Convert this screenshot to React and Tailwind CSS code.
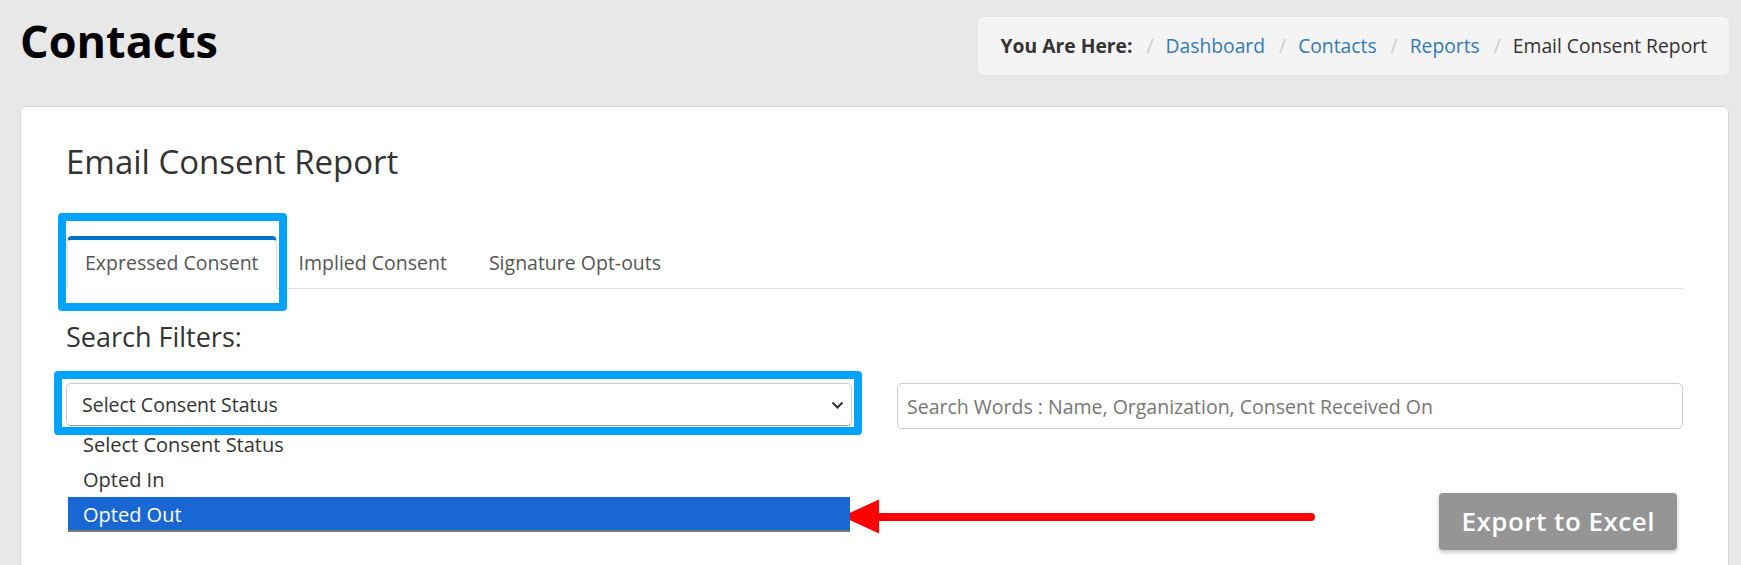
import { useState } from 'react'

const crumbs = [
  { label: 'Dashboard', link: true },
  { label: 'Contacts', link: true },
  { label: 'Reports', link: true },
  { label: 'Email Consent Report', link: false },
]

const tabs = ['Expressed Consent', 'Implied Consent', 'Signature Opt-outs']
const options = ['Select Consent Status', 'Opted In', 'Opted Out']

export default function App() {
  const [active] = useState(0)
  const [selected] = useState(2)

  return (
    <div className="relative min-h-[565px] overflow-hidden bg-[#e8e8e8] font-['Open_Sans',sans-serif]">
      <header className="flex items-start justify-between pl-5 pr-3 pt-[17px]">
        <h1 className="mt-[-1px] text-[45px] font-bold leading-[50px] text-black">Contacts</h1>
        <nav className="flex h-[58px] items-center rounded-md bg-[#f4f4f4] pl-[23px] pr-[22px] text-[19.3px]">
          <span className="font-bold text-[#333]">You Are Here:</span>
          {crumbs.map((c) => (
            <span key={c.label} className="flex items-center">
              <span className="pl-[14px] pr-[12px] text-[#ccc]">/</span>
              <span className={c.link ? 'text-[#337ab7]' : 'text-[#333]'}>{c.label}</span>
            </span>
          ))}
        </nav>
      </header>

      <section className="ml-5 mr-3 mt-[31px] rounded-md border border-[#d6d6d6] bg-white px-[45px] pb-[40px] pt-[37px]">
        <h2 className="text-[33px] leading-[36px] text-[#333]">Email Consent Report</h2>

        <ul className="mt-[56px] flex border-b border-[#ddd] text-[19.5px] leading-[26px]">
          {tabs.map((t, i) => (
            <li
              key={t}
              className={
                i === active
                  ? 'relative -mb-px ml-px rounded-t-[5px] border-x border-b border-t-4 border-[#ddd] border-b-white border-t-[#0070c9] bg-white px-[17px] pb-[12px] pt-[10px] text-[#555]'
                  : 'relative -mb-px ml-[2px] border-t-4 border-transparent px-[20px] pb-[13px] pt-[10px] text-[#555]'
              }
            >
              {t}
              {i === active && (
                <span className="pointer-events-none absolute -bottom-[23px] -left-[10px] -right-[11px] -top-[27px] z-20 rounded-[4px] border-[8px] border-[#00a3ff]" />
              )}
            </li>
          ))}
        </ul>

        <h3 className="mt-[32px] text-[27px] leading-[32px] text-[#333]">Search Filters:</h3>

        <div className="mt-[30px] grid grid-cols-2 items-start gap-[45px] text-[19.5px]">
          <div className="relative">
            <div className="flex h-[43px] items-center justify-between rounded-[5px] border border-[#ccc] border-b-[#999] pl-[15px] pr-[7px] text-[#333]">
              <span>Select Consent Status</span>
              <svg width="13" height="8" viewBox="0 0 13 8" fill="none">
                <path d="M1.5 1.5l5 5 5-5" stroke="#333" strokeWidth="2" />
              </svg>
            </div>
            <span className="pointer-events-none absolute -bottom-[9px] -left-[12px] -right-[10px] -top-[12px] z-20 rounded-[4px] border-[8px] border-[#00a3ff]" />
            <ul className="absolute left-[2px] right-[2px] top-[44px] z-10 bg-white text-[20px]">
              {options.map((o, i) => (
                <li
                  key={o}
                  className={
                    i === selected
                      ? 'h-[35px] border-b-2 border-[#7a7a7a] bg-[#1967d2] pl-[15px] leading-[35px] text-white'
                      : 'h-[35px] pl-[15px] leading-[35px] text-[#333]'
                  }
                >
                  {o}
                </li>
              ))}
            </ul>
          </div>
          <input
            readOnly
            placeholder="Search Words : Name, Organization, Consent Received On"
            className="h-[46px] w-full rounded-[5px] border border-[#ccc] px-[9px] text-[#333] outline-none placeholder:text-[#777]"
          />
        </div>

        <div className="mt-[64px] flex justify-end pr-[6px]">
          <button className="h-[57px] rounded-[4px] bg-[#959595] px-[22px] text-[26px] font-semibold tracking-[0.5px] text-white shadow-[0_2px_4px_rgba(0,0,0,0.25)]">
            Export to Excel
          </button>
        </div>
      </section>

      <svg className="pointer-events-none absolute left-[836px] top-[495px]" width="490" height="45" viewBox="0 0 490 45">
        <line x1="40" y1="22" x2="475" y2="22" stroke="#ff0000" strokeWidth="8" strokeLinecap="round" />
        <polygon points="6,21.5 43,4.5 43,38.5" fill="#ff0000" />
      </svg>
    </div>
  )
}
